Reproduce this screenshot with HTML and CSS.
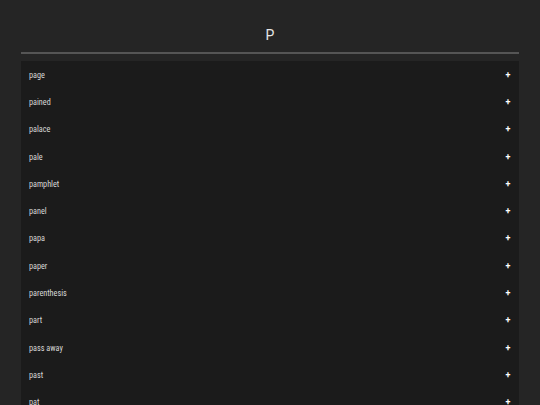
FILE: index.html
```html
<!DOCTYPE html>
<html>
<head>
<meta charset="utf-8">
<link rel="stylesheet" href="styles.css">
</head>
<body>
<div class="page">
  <header class="header"><h1 class="title">P</h1></header>
  <div class="rule"></div>
  <ul class="list">
    <li class="row"><span class="word">page</span><span class="plus">+</span></li>
    <li class="row"><span class="word">pained</span><span class="plus">+</span></li>
    <li class="row"><span class="word">palace</span><span class="plus">+</span></li>
    <li class="row"><span class="word">pale</span><span class="plus">+</span></li>
    <li class="row"><span class="word">pamphlet</span><span class="plus">+</span></li>
    <li class="row"><span class="word">panel</span><span class="plus">+</span></li>
    <li class="row"><span class="word">papa</span><span class="plus">+</span></li>
    <li class="row"><span class="word">paper</span><span class="plus">+</span></li>
    <li class="row"><span class="word">parenthesis</span><span class="plus">+</span></li>
    <li class="row"><span class="word">part</span><span class="plus">+</span></li>
    <li class="row"><span class="word">pass away</span><span class="plus">+</span></li>
    <li class="row"><span class="word">past</span><span class="plus">+</span></li>
    <li class="row"><span class="word">pat</span><span class="plus">+</span></li>
  </ul>
</div>
</body>
</html>
```
FILE: styles.css
```css
html, body {
  margin: 0;
  padding: 0;
  background: #252525;
  height: 100%;
  overflow: hidden;
}
.page {
  padding: 0 21px;
  font-family: Roboto, "Liberation Sans", sans-serif;
}
.header {
  height: 52px;
  display: flex;
  align-items: flex-end;
  justify-content: center;
}
.title {
  margin: 0 0 9px 0;
  font-size: 14px;
  font-weight: 400;
  color: #e6e6e6;
  line-height: 16px;
}
.rule {
  height: 2px;
  background: #555555;
}
.list {
  list-style: none;
  margin: 7px 0 0 0;
  padding: 0;
  background: #1b1b1b;
}
.row {
  height: 27.3px;
  display: flex;
  align-items: center;
  justify-content: space-between;
  padding: 0 8px;
}
.word {
  font-family: "Roboto Condensed", Roboto, sans-serif;
  font-stretch: condensed;
  font-size: 8.2px;
  color: #d8d8d8;
}
.plus {
  font-size: 9px;
  font-weight: 700;
  color: #ffffff;
  width: 6px;
  text-align: center;
}
```
